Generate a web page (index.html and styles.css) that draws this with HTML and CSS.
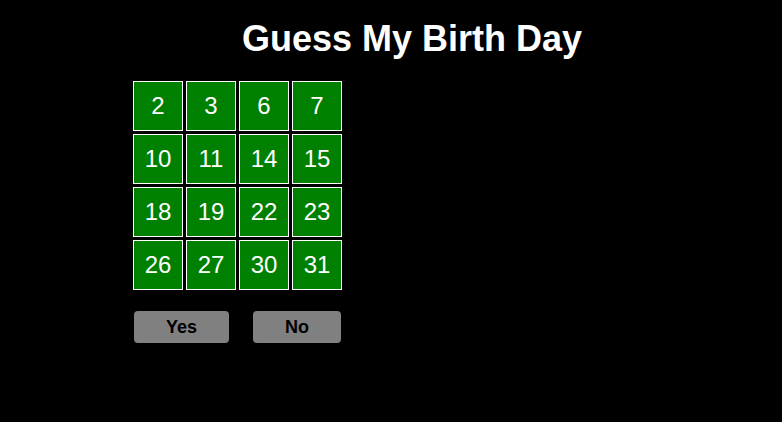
FILE: index.html
```html
<!DOCTYPE html>
<html>
<head>
<meta charset="utf-8">
<link rel="stylesheet" href="styles.css">
</head>
<body>
<h1 class="title">Guess My Birth Day</h1>
<div class="grid">
  <div class="cell">2</div><div class="cell">3</div><div class="cell">6</div><div class="cell">7</div>
  <div class="cell">10</div><div class="cell">11</div><div class="cell">14</div><div class="cell">15</div>
  <div class="cell">18</div><div class="cell">19</div><div class="cell">22</div><div class="cell">23</div>
  <div class="cell">26</div><div class="cell">27</div><div class="cell">30</div><div class="cell">31</div>
</div>
<div class="actions">
  <button class="btn">Yes</button>
  <button class="btn">No</button>
</div>
</body>
</html>
```
FILE: styles.css
```css
html, body {
  margin: 0;
  padding: 0;
  background: #000;
}
body {
  font-family: "Liberation Sans", Arial, sans-serif;
  color: #fff;
  min-height: 422px;
}
.title {
  margin: 0;
  padding: 18px 0 0 242px;
  font-size: 36px;
  line-height: 41px;
  font-weight: bold;
  color: #fff;
}
.grid {
  display: grid;
  grid-template-columns: repeat(4, 50px);
  grid-auto-rows: 50px;
  gap: 3px;
  margin: 22px 0 0 133px;
  width: max-content;
}
.cell {
  box-sizing: border-box;
  border: 1px solid #fff;
  background: #008000;
  color: #fff;
  font-size: 24px;
  display: flex;
  align-items: center;
  justify-content: center;
}
.actions {
  display: flex;
  gap: 24px;
  margin: 21px 0 0 134px;
}
.btn {
  box-sizing: border-box;
  height: 32px;
  padding: 0 32px;
  border: none;
  border-radius: 4px;
  background: #808080;
  color: #000;
  font-family: "Liberation Sans", Arial, sans-serif;
  font-size: 18px;
  font-weight: bold;
  line-height: 32px;
}
```
